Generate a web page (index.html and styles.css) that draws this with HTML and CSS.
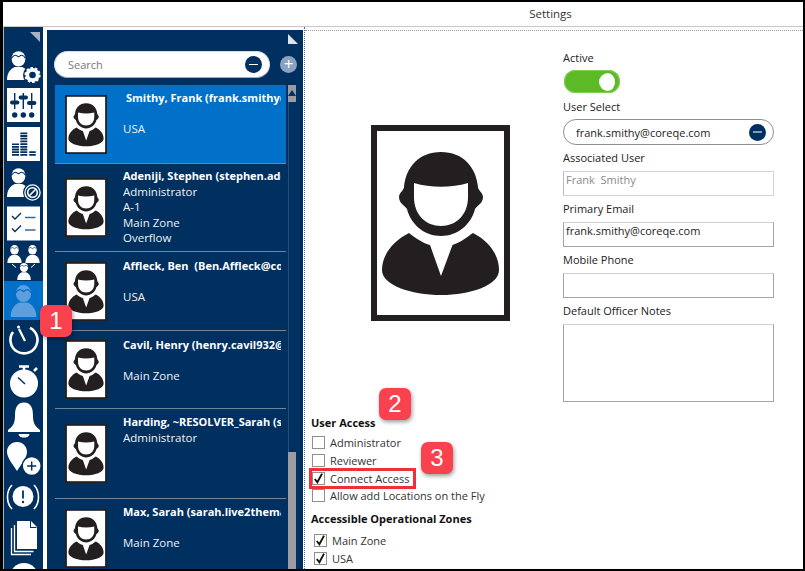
FILE: index.html
```html
<!DOCTYPE html>
<html lang="en">
<head>
<meta charset="utf-8">
<title>Settings</title>
<link rel="stylesheet" href="styles.css">
</head>
<body>
<svg class="defs" width="0" height="0" aria-hidden="true">
  <symbol id="portrait" viewBox="0 0 139 196">
    <rect width="139" height="196" fill="#231f20"/>
    <rect x="6" y="6" width="127" height="184" fill="#fff"/>
    <path fill="#231f20" d="M70 27C48 27 35 42 33 62C33 65 28 68 28 72C28 78 33 80 36 84C40 100 54 111 70 111C86 111 100 100 104 84C107 80 112 78 112 72C112 68 107 65 107 62C105 42 92 27 70 27Z"/>
    <path fill="#fff" d="M43 58C60 63 80 63 97 58V72C97 90 85 101 70 101C55 101 43 90 43 72Z"/>
    <path fill="#231f20" d="M38 108C46 114 52 118 59 120L70 151L81.5 120C88 118 95 113 102 108C118 116 128 130 128 145C128 160 100 170 70 170C40 170 11 160 11 145C11 130 22 116 38 108Z"/>
  </symbol>
  <symbol id="agent" viewBox="0 0 24 30" overflow="visible">
    <ellipse cx="12" cy="8" rx="7.2" ry="8" fill="currentColor"/>
    <path fill="currentColor" d="M0 30C0 23 3 19 8 16.500L16 16.500C21 19 24 23 24 30Z"/>
    <path fill="none" stroke="var(--visor,#00305f)" stroke-width="1.200" d="M4.500 7.500C8 3 9 4 12 6C15 4 16 3 19.500 7.500"/>
  </symbol>
  <symbol id="checkmark" viewBox="0 0 14 14">
    <path fill="none" stroke="#111" stroke-width="2" d="M3 7.500L5.800 11L10.800 1.800"/>
  </symbol>
</svg>

<div class="window">
  <header class="titlebar">Settings</header>
  <div class="workspace">

    <nav class="rail">
      <div class="corner"><span class="triangle"></span></div>
      <div class="rail-icon">
        <svg viewBox="0 0 39 39"><use href="#agent" x="3" y="4" width="23" height="31"/>
          <circle cx="28.500" cy="29" r="9.500" fill="#00305f"/>
          <circle cx="28.500" cy="29" r="5.200" fill="none" stroke="#fff" stroke-width="3.800"/>
          <circle cx="28.500" cy="29" r="7" fill="none" stroke="#fff" stroke-width="2.200" stroke-dasharray="2.500 1.900"/></svg>
      </div>
      <div class="rail-icon">
        <svg viewBox="0 0 39 39"><rect x="3" y="3" width="33" height="34" fill="#fff"/>
          <path stroke="#00305f" stroke-width="1.400" d="M10.700 8V24M19.300 8V24M27.700 8V24"/>
          <path stroke="#00305f" stroke-width="4" d="M8 17.500H13.400M16.600 12.500H22M25 18H30.400" stroke-linecap="round"/>
          <g fill="#00305f"><circle cx="10.700" cy="30" r="2.700"/><circle cx="19.300" cy="30" r="2.700"/><circle cx="27.700" cy="30" r="2.700"/></g></svg>
      </div>
      <div class="rail-icon">
        <svg viewBox="0 0 39 39"><rect x="3" y="3" width="33" height="34" fill="#fff"/>
          <g fill="none" stroke="#00305f" stroke-width="7" stroke-dasharray="1.800 .9">
            <path d="M11.500 31.800V19.500"/><path d="M19.800 31.800V8"/><path stroke-width="6.500" d="M28.500 31.800V27"/></g></svg>
      </div>
      <div class="rail-icon">
        <svg viewBox="0 0 39 39"><use href="#agent" x="3" y="4" width="23" height="31"/>
          <circle cx="28.500" cy="29.500" r="9.500" fill="#00305f"/>
          <circle cx="28.500" cy="29.500" r="7.600" fill="none" stroke="#fff" stroke-width="1.300"/>
          <circle cx="28.500" cy="29.500" r="4.800" fill="none" stroke="#fff" stroke-width="1.600"/>
          <path stroke="#fff" stroke-width="1.600" d="M25 33L32 26"/></svg>
      </div>
      <div class="rail-icon">
        <svg viewBox="0 0 39 39"><rect x="3" y="3.500" width="33" height="34" fill="#fff"/>
          <g fill="none" stroke="#00305f" stroke-width="1.400"><path d="M8 13L11 16L17 10M8 25.500L11 28.500L17 22.500"/><path stroke-width="1.600" stroke="#3c6a96" d="M21 14.500H31.500M21 27H31.500"/></g></svg>
      </div>
      <div class="rail-icon">
        <svg viewBox="0 0 39 39"><use href="#agent" x="3" y="3" width="15" height="18"/>
          <use href="#agent" x="21" y="3" width="15" height="18"/>
          <use href="#agent" x="13" y="21" width="14" height="17"/>
          <path stroke="#fff" stroke-width="1" d="M8 22L12 25.500M31 22L27 25.500"/></svg>
      </div>
      <div class="rail-icon rail-icon-active">
        <svg viewBox="0 0 39 39"><use href="#agent" x="5" y="4" width="29" height="32"/></svg>
      </div>
      <div class="rail-icon">
        <svg viewBox="0 0 39 39"><path fill="none" stroke="#fff" stroke-width="2.600" d="M26 7.800A13.500 13.500 0 1 1 9 12"/>
          <path stroke="#fff" stroke-width="2.200" d="M15 9L21 21"/><circle cx="14.500" cy="7" r="1.500" fill="#fff"/></svg>
      </div>
      <div class="rail-icon">
        <svg viewBox="0 0 39 39"><circle cx="20" cy="23.500" r="14" fill="#fff"/>
          <path stroke="#fff" stroke-width="2.500" d="M15 6.500H25M20 6.500V12M30 11L33 8"/>
          <path stroke="#00305f" stroke-width="1.500" d="M14 17.500L21 24"/></svg>
      </div>
      <div class="rail-icon">
        <svg viewBox="0 0 39 39"><path fill="#fff" d="M20 3.500C12 3.500 11 11 11 17C11 25 8 28 4 31V33H36V31C32 28 29 25 29 17C29 11 28 3.500 20 3.500Z"/>
          <path fill="#fff" d="M14.500 35H25.500C25 38 22 38.500 20 38.500C18 38.500 15 38 14.500 35Z"/></svg>
      </div>
      <div class="rail-icon">
        <svg viewBox="0 0 39 39"><path fill="#fff" d="M13 4C7 4 3 8.500 3 14C3 20 10 28 13 33C16 28 23 20 23 14C23 8.500 19 4 13 4Z"/>
          <circle cx="27.700" cy="28" r="9.500" fill="#fff" stroke="#00305f" stroke-width="1.500"/>
          <path stroke="#00305f" stroke-width="1.400" d="M27.700 23.500V32.500M23.200 28H32.200"/></svg>
      </div>
      <div class="rail-icon">
        <svg viewBox="0 0 39 39"><circle cx="19" cy="19.500" r="10.500" fill="#fff"/>
          <path fill="none" stroke="#fff" stroke-width="1.600" d="M8 8C2 14 2 26 8 32M30 8C36 14 36 26 30 32"/>
          <path stroke="#00305f" stroke-width="1.800" d="M19 13.500V21.500"/><circle cx="19" cy="25" r="1.200" fill="#00305f"/></svg>
      </div>
      <div class="rail-icon">
        <svg viewBox="0 0 39 39"><path fill="#fff" d="M13 4H27L33 10V32H13Z"/>
          <path fill="#00305f" d="M27 4V10H33L32 11H26V4Z"/>
          <path fill="none" stroke="#fff" stroke-width="1.300" d="M10.500 8V34.500H29.500M7.500 11V37.500H27"/></svg>
      </div>
      <div class="rail-icon">
        <svg viewBox="0 0 39 39"><circle cx="20" cy="21" r="14" fill="#fff"/></svg>
      </div>
    </nav>

    <section class="people">
      <div class="corner people-corner"><span class="triangle triangle-light"></span></div>
      <div class="search-row">
        <div class="search">
          <span class="search-text">Search</span>
          <span class="round-btn"><span class="minus"></span></span>
        </div>
        <span class="add-btn">+</span>
      </div>
      <div class="list-area">
        <ul class="rows">
          <li class="row row-selected">
            <svg class="thumb"><use href="#portrait"/></svg>
            <div class="row-text row-text-indent">
              <b>Smithy, Frank (frank.smithy@coreqe.com)</b><span class="blank"></span><span>USA</span>
            </div>
          </li>
          <li class="row row-tall">
            <svg class="thumb"><use href="#portrait"/></svg>
            <div class="row-text row-text-tight">
              <b>Adeniji, Stephen (stephen.adeniji@coreqe.com)</b><span>Administrator</span><span>A-1</span><span>Main Zone</span><span>Overflow</span>
            </div>
          </li>
          <li class="row">
            <svg class="thumb"><use href="#portrait"/></svg>
            <div class="row-text row-text-low">
              <b>Affleck, Ben&nbsp; (Ben.Affleck@coreqe.com)</b><span class="blank"></span><span>USA</span>
            </div>
          </li>
          <li class="row row-short">
            <svg class="thumb"><use href="#portrait"/></svg>
            <div class="row-text row-text-low">
              <b>Cavil, Henry (henry.cavil932@coreqe.com)</b><span class="blank"></span><span>Main Zone</span>
            </div>
          </li>
          <li class="row row-wide">
            <svg class="thumb"><use href="#portrait"/></svg>
            <div class="row-text">
              <b>Harding, ~RESOLVER_Sarah (sarah.harding@coreqe.com)</b><span>Administrator</span>
            </div>
          </li>
          <li class="row row-last">
            <svg class="thumb"><use href="#portrait"/></svg>
            <div class="row-text">
              <b>Max, Sarah (sarah.live2themax@coreqe.com)</b><span class="blank"></span><span>Main Zone</span>
            </div>
          </li>
        </ul>
        <div class="scrollbar">
          <span class="scroll-up"></span>
          <span class="scroll-thumb"></span>
        </div>
      </div>
    </section>

    <main class="details">
      <div class="details-top">
        <div class="photo-col">
          <svg class="photo"><use href="#portrait"/></svg>
        </div>
        <form class="form-col">
          <label class="field-label">Active</label>
          <span class="toggle"><span class="knob"></span></span>
          <label class="field-label">User Select</label>
          <div class="select"><span>frank.smithy@coreqe.com</span><span class="round-btn round-btn-small"><span class="minus"></span></span></div>
          <label class="field-label">Associated User</label>
          <div class="input input-disabled">Frank&nbsp; Smithy</div>
          <label class="field-label">Primary Email</label>
          <div class="input">frank.smithy@coreqe.com</div>
          <label class="field-label">Mobile Phone</label>
          <div class="input"></div>
          <label class="field-label">Default Officer Notes</label>
          <div class="input textarea"></div>
        </form>
      </div>
      <div class="access">
        <h2 class="access-title">User Access</h2>
        <div class="check"><span class="box"></span>Administrator</div>
        <div class="check"><span class="box"></span>Reviewer</div>
        <div class="check"><span class="box"><svg class="tick"><use href="#checkmark"/></svg></span>Connect Access</div>
        <div class="check"><span class="box"></span>Allow add Locations on the Fly</div>
        <h2 class="access-title zones-title">Accessible Operational Zones</h2>
        <div class="check zone"><span class="box"><svg class="tick"><use href="#checkmark"/></svg></span>Main Zone</div>
        <div class="check zone"><span class="box"><svg class="tick"><use href="#checkmark"/></svg></span>USA</div>
      </div>
    </main>
  </div>

  <span class="highlight"></span>
  <span class="badge badge-1">1</span>
  <span class="badge badge-2">2</span>
  <span class="badge badge-3">3</span>
</div>
</body>
</html>
```
FILE: styles.css
```css
* { box-sizing: border-box; }
html, body { margin: 0; padding: 0; background: #000; }
body { width: 805px; height: 571px; overflow: hidden; font-family: "Open Sans", "Noto Sans", sans-serif; font-size: 11px; color: #222; }
.defs { position: absolute; }

.window {
  position: relative;
  width: 805px;
  height: 571px;
  border-style: solid;
  border-color: #000;
  border-width: 2px 2px 2px 3px;
  background: #fff;
  display: flex;
  flex-direction: column;
  overflow: hidden;
}
.titlebar {
  height: 25px;
  flex: none;
  border-bottom: 1px solid #c8c8c8;
  text-align: center;
  line-height: 24px;
  padding-left: 295px;
  font-size: 11.500px;
  color: #333;
  background: #fff;
}
.workspace { flex: 1; display: flex; min-height: 0; }

/* rail */
.rail {
  flex: none;
  width: 39px;
  margin-left: 1px;
  background: #00305f;
  display: flex;
  flex-direction: column;
  overflow: hidden;
  box-shadow: -1px 0 0 #b5b5b5;
}
.corner { height: 18.500px; flex: none; display: flex; justify-content: flex-end; padding: 5px 3px 0 0; }
.triangle { width: 10px; height: 10px; background: #a8b3c2; clip-path: polygon(0 0, 100% 0, 100% 100%); }
.rail-icon { flex: none; height: 39.250px; color: #fff; }
.rail-icon svg { display: block; width: 39px; height: 39px; overflow: visible; }
.rail-icon-active { background: #0070c8; color: #5b9fdc; --visor: #0070c8; }

/* people list */
.people {
  flex: none;
  width: 256px;
  margin-left: 4px;
  margin-top: 3px;
  background: #00305f;
  display: flex;
  flex-direction: column;
  min-height: 0;
}
.people-corner { height: 21px; padding: 4px 5px 0 0; }
.triangle-light { background: #dfe4ea; clip-path: polygon(0 100%, 100% 100%, 0 0); }
.search-row { flex: none; height: 34px; display: flex; align-items: flex-start; padding-left: 7px; }
.search {
  width: 216px;
  height: 27px;
  border-radius: 14px;
  background: #fff;
  border: 1px solid #d7dde5;
  border-bottom-color: #9fb0c4;
  display: flex;
  align-items: center;
  justify-content: space-between;
  padding: 0 7px 0 13px;
}
.search-text { color: #77787a; font-size: 11px; }
.round-btn { width: 17px; height: 17px; border-radius: 50%; background: #00305f; display: flex; align-items: center; justify-content: center; flex: none; }
.minus { width: 9px; height: 1.500px; background: #fff; }
.round-btn-small { width: 17px; height: 17px; }
.round-btn-small .minus { background: #7c9cc0; }
.add-btn {
  width: 17px; height: 17px; margin: 5px 0 0 10px; border-radius: 50%;
  background: #8aa2bf; color: #fff; font-size: 17px; line-height: 15px; text-align: center;
}
.list-area { flex: 1; min-height: 0; display: flex; padding-left: 8px; }
.rows { list-style: none; margin: 0; padding: 0; width: 231px; flex: none; color: #eef2f7; }
.row {
  height: 79px;
  border-bottom: 1px solid #70849b;
  display: flex;
  align-items: center;
  padding-left: 10px;
  overflow: hidden;
}
.row-tall { height: 88px; }
.row-short { height: 78px; }
.row-wide { height: 90px; }
.row-last { border-bottom: 0; }
.row-selected { background: #0070c8; }
.thumb { width: 42px; height: 59px; flex: none; }
.row-text {
  align-self: flex-start;
  width: 158px;
  margin-left: 16px;
  padding-top: 5px;
  overflow: hidden;
  white-space: nowrap;
  line-height: 15.600px;
  font-size: 11.500px;
}
.row-text-tight { padding-top: 4px; }
.row-text-low { padding-top: 6px; }
.row-text b, .row-text span { display: block; }
.row-text b { color: #fff; font-weight: 700; font-size: 11px; }
.row-text .blank { height: 15.600px; }
.row-text-indent b { padding-left: 3px; }
.scrollbar {
  flex: none;
  width: 8px;
  margin-left: 2px;
  background: #9c9ca3;
  display: flex;
  flex-direction: column;
  align-items: center;
}
.scroll-up { margin-top: 5px; width: 0; height: 0; border-left: 4px solid transparent; border-right: 4px solid transparent; border-bottom: 6px solid #00305f; }
.scroll-thumb { margin-top: 6px; width: 8px; height: 350px; background: #00305f; box-shadow: inset 1px 0 #24507c; }

/* details */
.details { flex: 1; min-width: 0; margin-left: 1px; border-left: 1px dotted #3a6ea5; display: flex; flex-direction: column; }
.details-top {
  flex: none;
  height: 384px;
  margin-top: 3px;
  border-top: 1px dotted #9a9a9a;
  display: flex;
}
.photo-col { width: 258px; flex: none; padding: 94px 0 0 66px; }
.photo { display: block; width: 139px; height: 196px; }
.form-col { width: 211px; padding-top: 19px; display: flex; flex-direction: column; }
.field-label { display: block; height: 16px; line-height: 16px; font-size: 11px; color: #222; }
.toggle {
  width: 56px; height: 23px; margin: 4px 0 6px 1px; border-radius: 12px; background: #5cba27;
  display: flex; align-items: center; justify-content: flex-end; padding-right: 3px;
  box-shadow: inset 0 0 0 1px #7fd052;
}
.knob { width: 18px; height: 18px; border-radius: 50%; background: #fff; border-right: 2px solid #5cba27; }
.select {
  height: 26px; margin: 4px 0 5px; border: 1px solid #8f8f8f; border-radius: 13px;
  display: flex; align-items: center; justify-content: space-between; padding: 0 7px 0 12px;
  font-size: 11px; color: #222;
}
.input { height: 25px; margin: 5px 0 5px; border: 1px solid #a4a4a4; border-top-color: #d2d2d2; padding: 0 2px; line-height: 15px; font-size: 11px; color: #222; }
.input-disabled { color: #8a8a8a; border-color: #d4d4d4; border-left-color: #bbb; }
.textarea { height: 78px; margin-bottom: 0; }

.access { padding: 0 0 0 6px; }
.access-title { margin: 0 0 2px; height: 18px; line-height: 18px; font-size: 11px; font-weight: 700; color: #111; }
.zones-title { margin-top: 5px; margin-bottom: 2px; height: 19px; }
.check { display: flex; align-items: center; height: 17.700px; line-height: 17px; font-size: 11px; color: #333; }
.box { width: 13px; height: 13px; margin: 0 5px 0 1px; border: 1px solid #8f8f8f; background: #fff; flex: none; position: relative; }
.zone { height: 18.500px; }
.zone .box { margin-left: 3px; margin-right: 5px; }
.tick { position: absolute; left: -1px; top: -1px; width: 13px; height: 13px; }

/* annotations */
.highlight { position: absolute; left: 306px; top: 466px; width: 107px; height: 21px; border: 3px solid #ee3038; }
.badge {
  position: absolute; width: 32px; height: 32px; border-radius: 7px; background: #f9424d; color: #fff;
  font-family: "Liberation Sans", Arial, sans-serif; font-size: 24px; line-height: 32px; text-align: center;
  box-shadow: 1px 2px 4px rgba(0,0,0,.4);
}
.badge-1 { left: 37px; top: 303px; }
.badge-2 { left: 376px; top: 386px; }
.badge-3 { left: 418px; top: 440px; }
```
